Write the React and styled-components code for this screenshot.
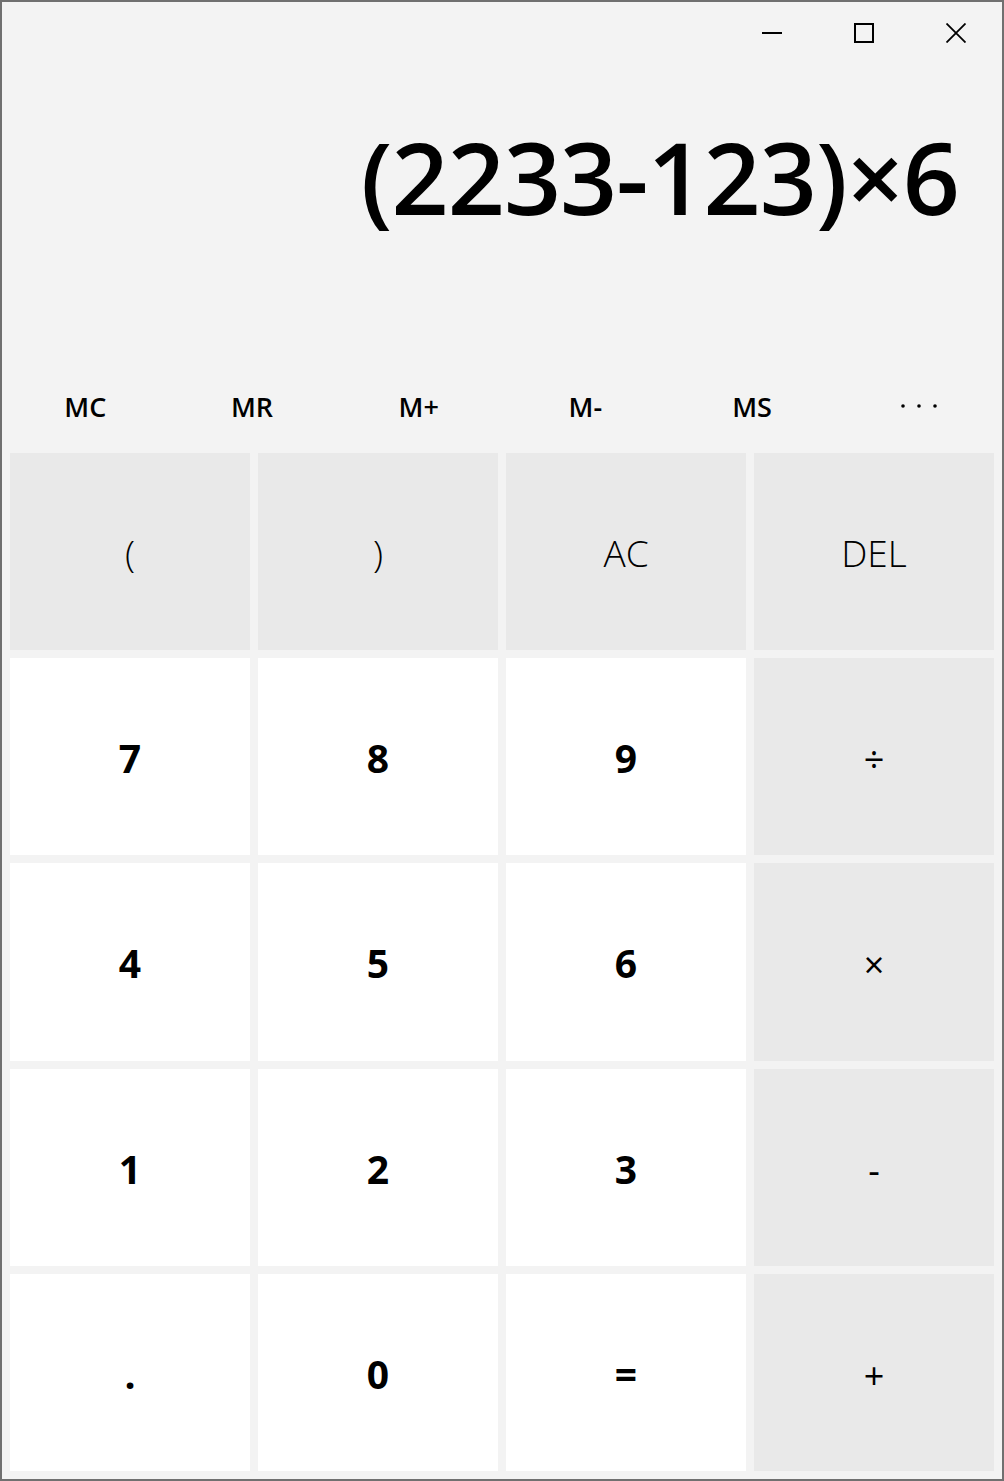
import React from 'react';
import styled, { createGlobalStyle } from 'styled-components';

const COLORS = {
  frame: '#707070',
  background: '#f3f3f3',
  muted: '#e9e9e9',
  number: '#ffffff',
  text: '#000000',
};

const GlobalStyle = createGlobalStyle`
  html, body {
    margin: 0;
    padding: 0;
    background: ${COLORS.background};
  }
  * {
    box-sizing: border-box;
  }
`;

const Window = styled.div`
  width: 1004px;
  height: 1481px;
  border: 2px solid ${COLORS.frame};
  background: ${COLORS.background};
  display: flex;
  flex-direction: column;
  font-family: "Open Sans", "Noto Sans", sans-serif;
  color: ${COLORS.text};
`;

const TitleBar = styled.div`
  height: 62px;
  display: flex;
  justify-content: flex-end;
  flex-shrink: 0;
`;

const CaptionButton = styled.div`
  width: 92px;
  height: 62px;
  display: flex;
  align-items: center;
  justify-content: center;
`;

const Display = styled.div`
  flex: 1;
  padding: 62px 43px 0 0;
  text-align: right;
  font-size: 100px;
  font-weight: 600;
  line-height: 100px;
  letter-spacing: -1px;
  white-space: nowrap;
`;

const MemoryRow = styled.div`
  height: 80px;
  display: grid;
  grid-template-columns: repeat(6, 1fr);
  flex-shrink: 0;
`;

const MemoryButton = styled.div`
  display: flex;
  align-items: center;
  justify-content: center;
  font-size: 27px;
  font-weight: 600;
`;

const Keypad = styled.div`
  height: 1033px;
  padding: 7px 8px 8px;
  display: grid;
  grid-template-columns: repeat(4, 1fr);
  grid-template-rows: repeat(5, 1fr);
  gap: 8px;
  flex-shrink: 0;
`;

const Key = styled.div`
  display: flex;
  align-items: center;
  justify-content: center;
  padding-top: ${({ $kind }) => ($kind === 'op' ? '6px' : '2px')};
  background: ${({ $kind }) => ($kind === 'num' ? COLORS.number : COLORS.muted)};
  font-size: ${({ $kind }) => ($kind === 'num' ? '39px' : $kind === 'op' ? '36px' : '37px')};
  font-weight: ${({ $kind }) => ($kind === 'num' ? 700 : $kind === 'op' ? 400 : 300)};
`;

const Minimize = () => (
  <svg width="20" height="20" viewBox="0 0 20 20">
    <path d="M0 10h20" stroke="#000" strokeWidth="2" fill="none" />
  </svg>
);

const Maximize = () => (
  <svg width="20" height="20" viewBox="0 0 20 20">
    <rect x="1" y="1" width="18" height="18" stroke="#000" strokeWidth="2" fill="none" />
  </svg>
);

const Close = () => (
  <svg width="20" height="20" viewBox="0 0 20 20">
    <path d="M0.5 0.5L19.5 19.5M19.5 0.5L0.5 19.5" stroke="#000" strokeWidth="1.8" fill="none" />
  </svg>
);

const More = () => (
  <svg width="36" height="6" viewBox="0 0 36 6">
    <circle cx="2" cy="3" r="1.8" fill="#000" />
    <circle cx="18" cy="3" r="1.8" fill="#000" />
    <circle cx="34" cy="3" r="1.8" fill="#000" />
  </svg>
);

const keys = [
  ['(', 'fn'], [')', 'fn'], ['AC', 'fn'], ['DEL', 'fn'],
  ['7', 'num'], ['8', 'num'], ['9', 'num'], ['÷', 'op'],
  ['4', 'num'], ['5', 'num'], ['6', 'num'], ['×', 'op'],
  ['1', 'num'], ['2', 'num'], ['3', 'num'], ['-', 'op'],
  ['.', 'num'], ['0', 'num'], ['=', 'num'], ['+', 'op'],
];

const App = () => {
  return (
    <>
      <GlobalStyle />
      <Window>
        <TitleBar>
          <CaptionButton><Minimize /></CaptionButton>
          <CaptionButton><Maximize /></CaptionButton>
          <CaptionButton><Close /></CaptionButton>
        </TitleBar>

        <Display>(2233-123)×6</Display>

        <MemoryRow>
          {['MC', 'MR', 'M+', 'M-', 'MS'].map((m) => (
            <MemoryButton key={m}>{m}</MemoryButton>
          ))}
          <MemoryButton><More /></MemoryButton>
        </MemoryRow>

        <Keypad>
          {keys.map(([label, kind]) => (
            <Key key={label} $kind={kind}>{label}</Key>
          ))}
        </Keypad>
      </Window>
    </>
  );
};

export default App;
